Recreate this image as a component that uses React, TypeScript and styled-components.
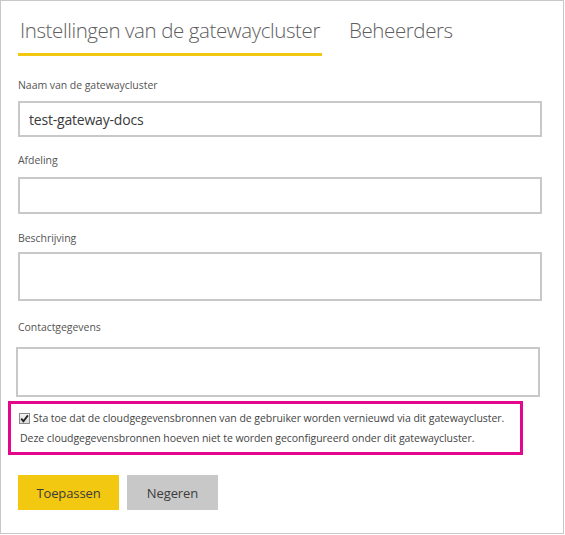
import styled, { createGlobalStyle } from "styled-components";

const GlobalStyle = createGlobalStyle`
  html, body {
    margin: 0;
    padding: 0;
    background: #ffffff;
  }
  body {
    font-family: "Open Sans", "Liberation Sans", sans-serif;
  }
`;

const Frame = styled.div`
  width: 564px;
  height: 534px;
  box-sizing: border-box;
  border: 1px solid #c8c8c8;
  background: #ffffff;
  padding: 0 0 0 17px;
`;

const Tabs = styled.div`
  display: flex;
  gap: 25px;
  padding-top: 14px;
`;

const Tab = styled.div<{ $active?: boolean }>`
  padding: 0 2px 8px 2px;
  font-size: 20.5px;
  font-weight: 300;
  letter-spacing: -0.4px;
  line-height: 30px;
  color: #5e5e5e;
  border-bottom: 3px solid ${(p) => (p.$active ? "#f2c811" : "transparent")};
`;

const Form = styled.div`
  display: flex;
  flex-direction: column;
  padding-top: 21px;
`;

const Label = styled.div<{ $before: number; $after: number }>`
  margin-top: ${(p) => p.$before}px;
  margin-bottom: ${(p) => p.$after}px;
  font-size: 10.5px;
  letter-spacing: -0.05px;
  line-height: 16px;
  color: #555555;
`;

const Input = styled.div<{ $height: number; $shift?: number }>`
  width: 524px;
  height: ${(p) => p.$height}px;
  box-sizing: border-box;
  margin-left: ${(p) => p.$shift ?? 0}px;
  border: 2px solid #c8c8c8;
  padding: 0 9px;
  display: flex;
  align-items: center;
  font-size: 14px;
  letter-spacing: -0.2px;
  color: #3a3a3a;
`;

const Highlight = styled.div`
  margin: 4px 0 0 -10px;
  width: 515px;
  box-sizing: border-box;
  border: 3px solid #e4068c;
  padding: 4px 8px 4px 8px;
  font-size: 10.5px;
  letter-spacing: -0.05px;
  line-height: 20px;
  color: #444444;
  white-space: nowrap;
`;

const CheckRow = styled.div`
  display: flex;
  align-items: center;
  gap: 3px;
`;

const Box = styled.span`
  width: 11px;
  height: 11px;
  box-sizing: border-box;
  border: 1px solid #8a8a8a;
  background: linear-gradient(#f4f4f4, #dcdcdc);
  display: flex;
  align-items: center;
  justify-content: center;
`;

const Note = styled.div`
  padding-left: 1px;
`;

const Actions = styled.div`
  display: flex;
  gap: 8px;
  margin-top: 20px;
`;

const Button = styled.button<{ $primary?: boolean; $width: number }>`
  width: ${(p) => p.$width}px;
  height: 35px;
  padding: 0;
  border: none;
  border-radius: 0;
  font-family: inherit;
  font-size: 13px;
  letter-spacing: -0.1px;
  color: #3c3c3c;
  background: ${(p) => (p.$primary ? "#f2c811" : "#c8c8c8")};
`;

export default function App() {
  return (
    <>
      <GlobalStyle />
      <Frame>
        <Tabs>
          <Tab $active>Instellingen van de gatewaycluster</Tab>
          <Tab>Beheerders</Tab>
        </Tabs>
        <Form>
          <Label $before={0} $after={8}>Naam van de gatewaycluster</Label>
          <Input $height={36}>test-gateway-docs</Input>
          <Label $before={15} $after={9}>Afdeling</Label>
          <Input $height={37} />
          <Label $before={16} $after={6}>Beschrijving</Label>
          <Input $height={49} />
          <Label $before={18} $after={12}>Contactgegevens</Label>
          <Input $height={50} $shift={-2} />
          <Highlight>
            <CheckRow>
              <Box>
                <svg width="9" height="9" viewBox="0 0 9 9">
                  <path
                    d="M1.2 4.6 L3.4 7.2 L7.9 1.4"
                    fill="none"
                    stroke="#222"
                    strokeWidth="1.8"
                  />
                </svg>
              </Box>
              <span>
                Sta toe dat de cloudgegevensbronnen van de gebruiker worden
                vernieuwd via dit gatewaycluster.
              </span>
            </CheckRow>
            <Note>
              Deze cloudgegevensbronnen hoeven niet te worden geconfigureerd
              onder dit gatewaycluster.
            </Note>
          </Highlight>
          <Actions>
            <Button $primary $width={101}>
              Toepassen
            </Button>
            <Button $width={91}>Negeren</Button>
          </Actions>
        </Form>
      </Frame>
    </>
  );
}
